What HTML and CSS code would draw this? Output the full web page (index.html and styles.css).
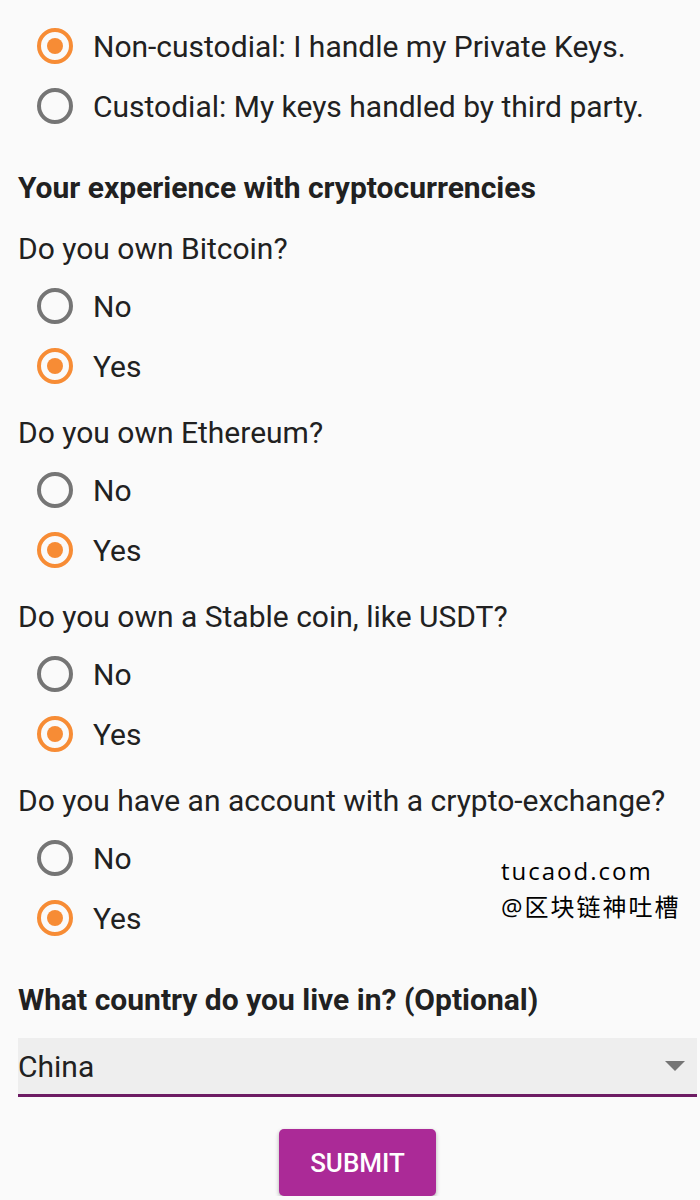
FILE: index.html
```html
<!DOCTYPE html>
<html lang="en">
<head>
<meta charset="UTF-8">
<meta name="viewport" content="width=device-width, initial-scale=1.0">
<title>Crypto survey</title>
<link rel="stylesheet" href="styles.css">
</head>
<body>
  <form class="survey">
    <div class="options">
      <label class="option"><input type="radio" name="wallet" checked><span>Non-custodial: I handle my Private Keys.</span></label>
      <label class="option"><input type="radio" name="wallet"><span>Custodial: My keys handled by third party.</span></label>
    </div>

    <h2 class="section-title">Your experience with cryptocurrencies</h2>

    <div class="question">
      <p class="question-text">Do you own Bitcoin?</p>
      <label class="option"><input type="radio" name="btc"><span>No</span></label>
      <label class="option"><input type="radio" name="btc" checked><span>Yes</span></label>
    </div>

    <div class="question">
      <p class="question-text">Do you own Ethereum?</p>
      <label class="option"><input type="radio" name="eth"><span>No</span></label>
      <label class="option"><input type="radio" name="eth" checked><span>Yes</span></label>
    </div>

    <div class="question">
      <p class="question-text">Do you own a Stable coin, like USDT?</p>
      <label class="option"><input type="radio" name="stable"><span>No</span></label>
      <label class="option"><input type="radio" name="stable" checked><span>Yes</span></label>
    </div>

    <div class="question">
      <p class="question-text">Do you have an account with a crypto-exchange?</p>
      <label class="option"><input type="radio" name="exchange"><span>No</span></label>
      <label class="option"><input type="radio" name="exchange" checked><span>Yes</span></label>
    </div>

    <h2 class="section-title country-title">What country do you live in? (Optional)</h2>

    <div class="select-field">
      <span class="select-value">China</span>
      <span class="select-arrow"></span>
    </div>

    <div class="actions">
      <button type="button" class="submit">SUBMIT</button>
    </div>
  </form>

  <div class="watermark">
    <div>tucaod.com</div>
    <div>@区块链神吐槽</div>
  </div>
</body>
</html>
```

FILE: styles.css
```css
body {
  margin: 0;
  padding: 16px 3px 0 18px;
  background-color: #fafafa;
  color: #212121;
  font-family: Roboto, "Liberation Sans", sans-serif;
  font-size: 30px;
}

.survey {
  display: flex;
  flex-direction: column;
}

.option {
  display: flex;
  align-items: center;
  height: 60px;
  padding-left: 19px;
}

.option input {
  appearance: none;
  -webkit-appearance: none;
  margin: 0 20px 0 0;
  width: 36px;
  height: 36px;
  border: 4px solid #757575;
  border-radius: 50%;
  box-sizing: border-box;
  display: grid;
  place-items: center;
}

.option input:checked {
  border-color: #f78c35;
}

.option input:checked::after {
  content: "";
  width: 16px;
  height: 16px;
  border-radius: 50%;
  background-color: #f78c35;
}

.section-title {
  margin: 34px 0 25px;
  font-size: 30px;
  line-height: 36px;
  font-weight: 700;
}

.question {
  margin-bottom: 19px;
}

.question-text {
  margin: 0 0 9px;
  line-height: 36px;
}

.country-title {
  margin: 15px 0 20px;
}

.select-field {
  display: flex;
  align-items: center;
  justify-content: space-between;
  height: 56px;
  background-color: #eeeeee;
  border-bottom: 3px solid #6d1b63;
}

.select-arrow {
  width: 0;
  height: 0;
  margin-right: 12px;
  border-left: 10px solid transparent;
  border-right: 10px solid transparent;
  border-top: 10px solid #757575;
}

.actions {
  display: flex;
  justify-content: center;
  padding-top: 32px;
}

.submit {
  width: 157px;
  height: 67px;
  border: none;
  border-radius: 5px;
  background-color: #ab2a97;
  color: #ffffff;
  font-family: Roboto, "Liberation Sans", sans-serif;
  font-size: 26px;
  font-weight: 500;
  box-shadow: 0 2px 4px rgba(0, 0, 0, 0.3);
}

.watermark {
  position: absolute;
  left: 501px;
  top: 853px;
  color: #000000;
  font-family: "Open Sans", "Noto Sans CJK SC", sans-serif;
  font-size: 24px;
  line-height: 36px;
  letter-spacing: 2px;
}
```
